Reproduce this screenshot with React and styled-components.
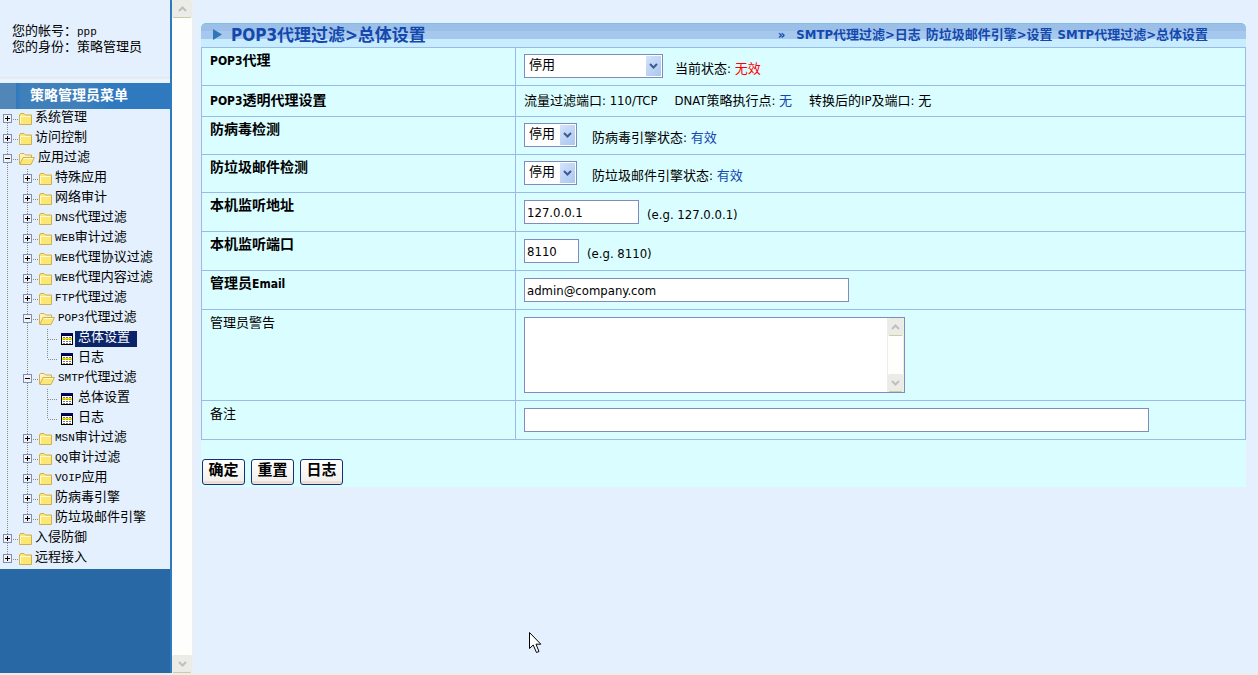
import React from "react";
import styled, { createGlobalStyle, css } from "styled-components";

const GlobalStyle = createGlobalStyle`
    * {
        box-sizing: border-box;
    }
    body {
        margin: 0;
        background-color: #e4f0fd;
        color: #000000;
        font-family: "DejaVu Sans Condensed", "Noto Sans CJK SC", sans-serif;
        font-size: 13px;
        line-height: 18px;
    }
    a {
        color: inherit;
        text-decoration: none;
    }
`;

const Page = styled.div`
    position: relative;
    display: flex;
    min-height: 100vh;
    border-bottom: 2px solid #eceeea;
`;

const Sidebar = styled.aside`
    flex: none;
    width: 172px;
    border-right: 2px solid #2f7abf;
    background-color: #2868a4;
    font-family: "Liberation Mono", "Noto Sans CJK SC", monospace;
`;

const Account = styled.div`
    height: 83px;
    padding: 24px 12px 0;
    background: linear-gradient(#e4f0fd 77px, #dfe6f2 77px, #eef6f8 80px, #e4f0fd 83px);
    line-height: 16px;
    white-space: nowrap;
`;

const MenuTitle = styled.h2`
    height: 26px;
    margin: 0;
    padding-left: 30px;
    background: linear-gradient(90deg, #5087b8 16px, #2f78be 16px, #3f80bb 22px, #3f80bb 80px, #2f7abf 110px);
    color: #ffffff;
    font-size: 14px;
    line-height: 26px;
`;

const Tree = styled.ul`
    margin: 0;
    padding: 0;
    list-style: none;
    background-color: #e4f0fd;
`;

const TreeRow = styled.li`
    display: flex;
    align-items: center;
    height: 20px;
    white-space: nowrap;
`;

const dots = "#8d8d78 0 1px, transparent 1px 2px";

const Guide = styled.span`
    flex: none;
    display: flex;
    align-items: center;
    width: ${props => props.$width || 20}px;
    height: 20px;
    background-repeat: no-repeat;
    ${props => props.$line && css`
        background-image: repeating-linear-gradient(180deg, ${dots});
        background-size: 1px ${props.$line === "full" ? 20 : 10}px;
        background-position: 7px ${props.$line === "bottom" ? 10 : 0}px;
    `}
`;

const Toggle = styled.button`
    display: flex;
    margin: 0 0 0 3px;
    padding: 0 0 1px;
    border: none;
    background: none;
`;

const Dash = styled.span`
    width: ${props => props.$width}px;
    height: 1px;
    margin-left: ${props => props.$start}px;
    background-image: repeating-linear-gradient(90deg, ${dots});
`;

const TreeLink = styled.a`
    height: 16px;
    margin-left: 2px;
    padding: 0 7px 0 ${props => (props.$leaf ? 3 : 1)}px;
    background-color: ${props => (props.$current ? "#0a246a" : "transparent")};
    color: ${props => (props.$current ? "#ffffff" : "#000000")};
    line-height: 14px;
`;

const Narrow = styled.span`
    font-size: 11px;
`;

const ScrollTrack = styled.div`
    flex: none;
    display: flex;
    flex-direction: column;
    justify-content: space-between;
    align-items: center;
    width: ${props => props.$width}px;
    border-right: 1px solid #efeee8;
    background-color: #fefefd;
`;

const ScrollButton = styled.button`
    display: flex;
    align-items: center;
    justify-content: center;
    width: 100%;
    height: 18px;
    padding: 0;
    border: 1px solid #e6efdd;
    border-bottom-color: #cccca8;
    border-radius: 2px;
    background-color: #ebebe8;
`;

const Main = styled.main`
    flex: 1;
    min-width: 0;
    padding: 23px 12px 0 8px;
`;

const Panel = styled.form`
    padding-bottom: 2px;
    background-color: #dafdff;
`;

const PanelHeader = styled.header`
    display: flex;
    align-items: center;
    justify-content: space-between;
    height: 24px;
    padding: 0 38px 2px 12px;
    border-top: 1px solid #80bfe5;
    border-radius: 5px 5px 0 0;
    background: linear-gradient(#9cbfe7 7px, #a6c8ef 7px 15px, #c8edff 15px);
    color: #1348ad;
    font-weight: bold;
    white-space: nowrap;
`;

const Title = styled.h1`
    display: flex;
    align-items: center;
    gap: 9px;
    margin: 0;
    font-size: 17px;
    line-height: 20px;
`;

const Shortcuts = styled.nav`
    display: flex;
    gap: 5px;
`;

const Chevrons = styled.span`
    margin-right: 6px;
`;

const Settings = styled.table`
    width: 100%;
    border-collapse: collapse;
    table-layout: fixed;
`;

const LabelCell = styled.th`
    width: 314px;
    padding: ${props => (props.$plain ? 4 : 3)}px 8px 4px;
    border: 1px solid #99bbe8;
    font-size: ${props => (props.$plain ? 13 : 14)}px;
    font-weight: ${props => (props.$plain ? "normal" : "bold")};
    text-align: left;
    vertical-align: ${props => (props.$middle ? "middle" : "top")};
`;

const Latin = styled.span`
    font-size: 12px;
`;

const FieldCell = styled.td`
    padding: ${props => (props.$select ? "6px 8px 7px" : "7px 8px")};
    border: 1px solid #99bbe8;
`;

const Field = styled.div`
    display: flex;
    align-items: flex-end;
    gap: ${props => props.$gap || 8}px;
    white-space: nowrap;
`;

const Line = styled.div`
    display: flex;
    gap: 17px;
    height: 16px;
    line-height: 16px;
    white-space: nowrap;
`;

const Status = styled.span`
    color: ${props => (props.$off ? "#ff0000" : "#1348ad")};
`;

const box = css`
    border: 1px solid #7f8cbd;
    border-radius: 0;
    background-color: #ffffff;
    color: #000000;
    font: inherit;
    outline: none;
`;

const TextInput = styled.input`
    ${box}
    width: ${props => props.$width}px;
    height: 24px;
    padding: 0 2px;
`;

const SelectBox = styled.span`
    position: relative;
    display: flex;
    width: ${props => props.$width}px;
    height: 24px;
`;

const SelectInput = styled.select`
    ${box}
    appearance: none;
    width: 100%;
    padding: 0 18px 2px 4px;
`;

const SelectArrow = styled.span`
    position: absolute;
    top: 2px;
    right: 2px;
    display: flex;
    align-items: center;
    justify-content: center;
    width: 15px;
    height: 20px;
    background: linear-gradient(135deg, #d3e3fc, #a9c7ef);
    pointer-events: none;
`;

const MessageBox = styled.div`
    display: flex;
    width: 381px;
    height: 76px;
    border: 1px solid #7f8cbd;
    background-color: #ffffff;
`;

const Message = styled.textarea`
    ${box}
    flex: 1;
    border: none;
    border-right: 1px solid #ececec;
    resize: none;
`;

const Actions = styled.div`
    display: flex;
    gap: 6px;
    padding: 19px 1px 0;
`;

const ActionButton = styled.button`
    width: 43px;
    height: 26px;
    padding: 0 0 4px;
    border: 1px solid #15307a;
    border-radius: 3px;
    background: linear-gradient(#ffffff, #f2f0ec 21px, #f3c9c4 22px, #e9e7e2 23px);
    color: #000000;
    font-family: inherit;
    font-size: 15px;
    font-weight: bold;
    line-height: 20px;
`;

const Pointer = styled.svg`
    position: absolute;
    top: 632px;
    left: 529px;
    pointer-events: none;
`;

const ToggleIcon = ({ open }) => (
    <svg width="9" height="9" shapeRendering="crispEdges">
        <path d="M0 0H9V9H0Z" fill="#7b8ebc" />
        <path d="M1 1H8V8H1Z" fill="#f4f2ee" />
        <path d={open ? "M2 4H7V5H2Z" : "M2 4H7V5H2ZM4 2H5V7H4Z"} fill="#000000" />
    </svg>
);

const FolderIcon = () => (
    <svg width="13" height="12">
        <path d="M0.5 2L1.5 0.5H5L6.5 2H12.5V11.5H0.5Z" fill="#fde773" stroke="#cfae55" />
        <path d="M1.5 3.5H11.5M1.5 3V10.5" fill="none" stroke="#fffbd0" />
    </svg>
);

const OpenFolderIcon = () => (
    <svg width="16" height="12">
        <path d="M0.5 11V1.5L1.5 0.5H5L6.5 2H12.5V5" fill="#fff2bb" stroke="#cfae55" />
        <path d="M0.8 11.5L4 4.5H15.4L12 11.5Z" fill="#fde773" stroke="#cfae55" />
        <path d="M4.5 5.5H14" stroke="#fffbd0" />
    </svg>
);

const GridIcon = () => (
    <svg width="12" height="12" shapeRendering="crispEdges">
        <path d="M0 0H12V12H0Z" fill="#000000" />
        <path d="M1 3H11V11H1Z" fill="#ffffff" />
        <path d="M0 0H12V2H0Z" fill="#000080" />
        <path d="M1 5H11V7H1Z" fill="#f7e400" />
        <path d="M2 4.5H10M2 8.5H10M2 10.5H10" stroke="#77777f" strokeDasharray="2 1" />
        <path d="M2 6.5H10" stroke="#b5a820" strokeDasharray="2 1" />
    </svg>
);

const Chevron = ({ up, color }) => (
    <svg width="9" height="6">
        <path d={up ? "M1 5L4.5 1.5L8 5" : "M1 1L4.5 4.5L8 1"} fill="none" stroke={color} strokeWidth="2" />
    </svg>
);

const Scrollbar = ({ width }) => (
    <ScrollTrack $width={width}>
        <ScrollButton type="button" aria-label="up"><Chevron up color="#bfbfbd" /></ScrollButton>
        <ScrollButton type="button" aria-label="down"><Chevron color="#bfbfbd" /></ScrollButton>
    </ScrollTrack>
);

const Select = ({ id, width }) => (
    <SelectBox $width={width}>
        <SelectInput id={id} defaultValue="off">
            <option value="off">停用</option>
        </SelectInput>
        <SelectArrow><Chevron color="#3f5a94" /></SelectArrow>
    </SelectBox>
);

const menu = [
    { level: 1, text: "系统管理", line: "bottom" },
    { level: 1, text: "访问控制" },
    { level: 1, text: "应用过滤", open: true },
    { level: 2, text: "特殊应用" },
    { level: 2, text: "网络审计" },
    { level: 2, latin: "DNS", text: "代理过滤" },
    { level: 2, latin: "WEB", text: "审计过滤" },
    { level: 2, latin: "WEB", text: "代理协议过滤" },
    { level: 2, latin: "WEB", text: "代理内容过滤" },
    { level: 2, latin: "FTP", text: "代理过滤" },
    { level: 2, latin: "POP3", text: "代理过滤", open: true },
    { level: 3, text: "总体设置", current: true },
    { level: 3, text: "日志", line: "top" },
    { level: 2, latin: "SMTP", text: "代理过滤", open: true },
    { level: 3, text: "总体设置" },
    { level: 3, text: "日志", line: "top" },
    { level: 2, latin: "MSN", text: "审计过滤" },
    { level: 2, latin: "QQ", text: "审计过滤" },
    { level: 2, latin: "VOIP", text: "应用" },
    { level: 2, text: "防病毒引擎" },
    { level: 2, text: "防垃圾邮件引擎", line: "top" },
    { level: 1, text: "入侵防御" },
    { level: 1, text: "远程接入", line: "top" }
];

const TreeItem = ({ level, latin, text, open, current, line = "full" }) => {
    const leaf = level === 3;
    return (
        <TreeRow>
            {level > 1 && <Guide $line="full" />}
            {leaf && <Guide $line="full" />}
            <Guide $width={leaf ? 21 : 19} $line={line}>
                {leaf ? (
                    <Dash $start={8} $width={10} />
                ) : (
                    <>
                        <Toggle type="button" aria-label={text}><ToggleIcon open={open} /></Toggle>
                        <Dash $start={1} $width={5} />
                    </>
                )}
            </Guide>
            {leaf ? <GridIcon /> : open ? <OpenFolderIcon /> : <FolderIcon />}
            <TreeLink href="#" $leaf={leaf} $current={current}>
                {latin && <Narrow>{latin}</Narrow>}{text}
            </TreeLink>
        </TreeRow>
    );
};

const App = () => (
    <>
        <GlobalStyle />
        <Page>
            <Sidebar>
                <Account>
                    <div>您的帐号：<Narrow>ppp</Narrow></div>
                    <div>您的身份：策略管理员</div>
                </Account>
                <MenuTitle>策略管理员菜单</MenuTitle>
                <Tree>
                    {menu.map((item, index) => <TreeItem key={index} {...item} />)}
                </Tree>
            </Sidebar>
            <Scrollbar width={21} />
            <Main>
                <Panel onSubmit={e => e.preventDefault()}>
                    <PanelHeader>
                        <Title>
                            <svg width="9" height="11"><path d="M0 0L9 5.5L0 11Z" fill="#2f78b5" /></svg>
                            POP3代理过滤&gt;总体设置
                        </Title>
                        <Shortcuts>
                            <Chevrons>»</Chevrons>
                            <a href="#">SMTP代理过滤&gt;日志</a>
                            <a href="#">防垃圾邮件引擎&gt;设置</a>
                            <a href="#">SMTP代理过滤&gt;总体设置</a>
                        </Shortcuts>
                    </PanelHeader>
                    <Settings>
                        <tbody>
                            <tr>
                                <LabelCell><label htmlFor="proxy"><Latin>POP3</Latin>代理</label></LabelCell>
                                <FieldCell $select>
                                    <Field $gap={12}>
                                        <Select id="proxy" width={139} />
                                        <span>当前状态: <Status $off>无效</Status></span>
                                    </Field>
                                </FieldCell>
                            </tr>
                            <tr>
                                <LabelCell $middle><Latin>POP3</Latin>透明代理设置</LabelCell>
                                <FieldCell>
                                    <Line>
                                        <span>流量过滤端口: 110/TCP</span>
                                        <span>DNAT策略执行点: <Status>无</Status></span>
                                        <span>转换后的IP及端口: 无</span>
                                    </Line>
                                </FieldCell>
                            </tr>
                            <tr>
                                <LabelCell><label htmlFor="virus">防病毒检测</label></LabelCell>
                                <FieldCell $select>
                                    <Field $gap={15}>
                                        <Select id="virus" width={53} />
                                        <span>防病毒引擎状态: <Status>有效</Status></span>
                                    </Field>
                                </FieldCell>
                            </tr>
                            <tr>
                                <LabelCell><label htmlFor="spam">防垃圾邮件检测</label></LabelCell>
                                <FieldCell $select>
                                    <Field $gap={15}>
                                        <Select id="spam" width={53} />
                                        <span>防垃圾邮件引擎状态: <Status>有效</Status></span>
                                    </Field>
                                </FieldCell>
                            </tr>
                            <tr>
                                <LabelCell><label htmlFor="address">本机监听地址</label></LabelCell>
                                <FieldCell>
                                    <Field>
                                        <TextInput id="address" $width={115} defaultValue="127.0.0.1" />
                                        <span>(e.g. 127.0.0.1)</span>
                                    </Field>
                                </FieldCell>
                            </tr>
                            <tr>
                                <LabelCell><label htmlFor="port">本机监听端口</label></LabelCell>
                                <FieldCell>
                                    <Field>
                                        <TextInput id="port" $width={55} defaultValue="8110" />
                                        <span>(e.g. 8110)</span>
                                    </Field>
                                </FieldCell>
                            </tr>
                            <tr>
                                <LabelCell><label htmlFor="email">管理员<Latin>Email</Latin></label></LabelCell>
                                <FieldCell>
                                    <Field>
                                        <TextInput id="email" $width={325} defaultValue="admin@company.com" />
                                    </Field>
                                </FieldCell>
                            </tr>
                            <tr>
                                <LabelCell $plain><label htmlFor="warning">管理员警告</label></LabelCell>
                                <FieldCell>
                                    <MessageBox>
                                        <Message id="warning" />
                                        <Scrollbar width={16} />
                                    </MessageBox>
                                </FieldCell>
                            </tr>
                            <tr>
                                <LabelCell $plain><label htmlFor="remark">备注</label></LabelCell>
                                <FieldCell>
                                    <Field>
                                        <TextInput id="remark" $width={625} />
                                    </Field>
                                </FieldCell>
                            </tr>
                        </tbody>
                    </Settings>
                    <Actions>
                        <ActionButton type="submit">确定</ActionButton>
                        <ActionButton type="reset">重置</ActionButton>
                        <ActionButton type="button">日志</ActionButton>
                    </Actions>
                </Panel>
            </Main>
            <Pointer width="13" height="22" viewBox="0 0 13 22">
                <path d="M0.5 0.5V16.5L4.2 13L7.5 20.5L10 19.5L7 12.2H11.8Z" fill="#ffffff" stroke="#000000" />
            </Pointer>
        </Page>
    </>
);

export default App;
